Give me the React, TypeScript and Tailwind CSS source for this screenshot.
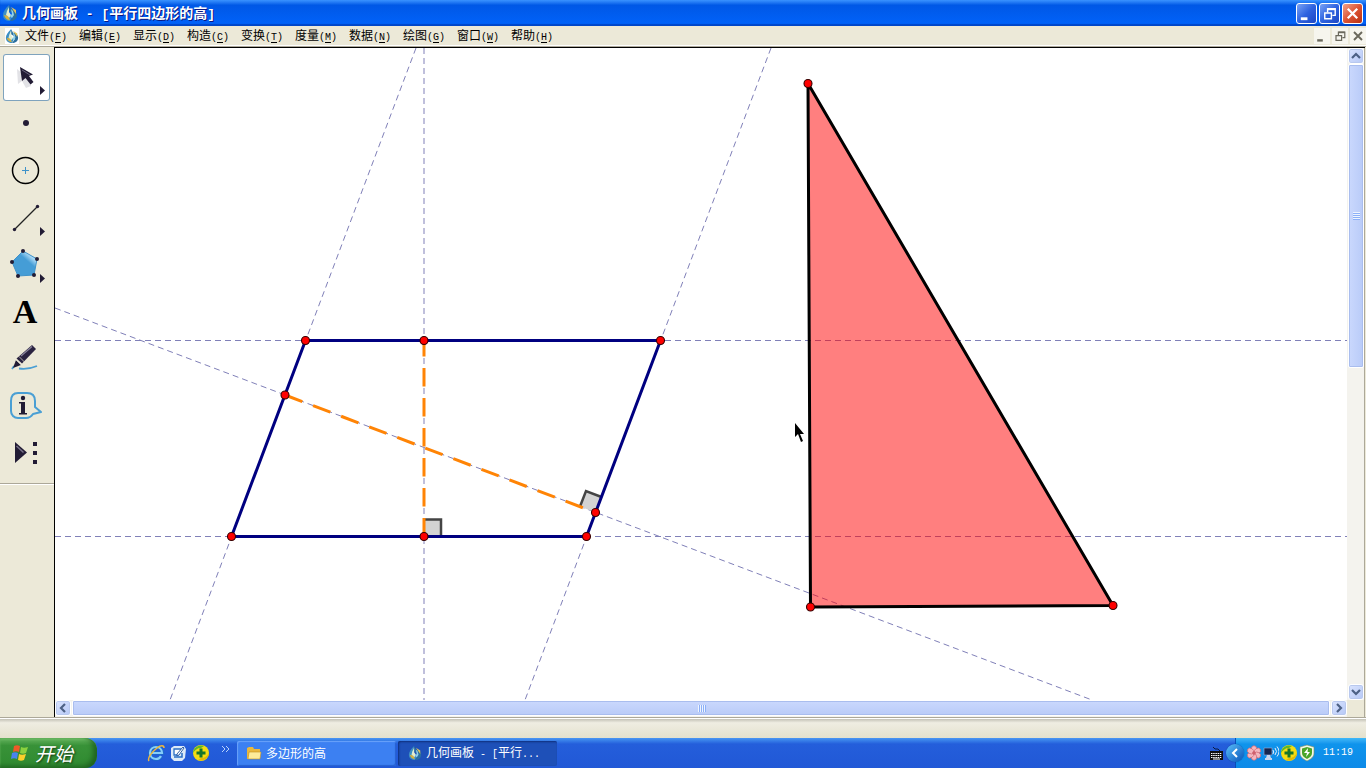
import { useState } from 'react';
import type { ReactNode } from 'react';
import { clsx } from 'clsx';

const menus = [
  { label: '文件', key: 'F' },
  { label: '编辑', key: 'E' },
  { label: '显示', key: 'D' },
  { label: '构造', key: 'C' },
  { label: '变换', key: 'T' },
  { label: '度量', key: 'M' },
  { label: '数据', key: 'N' },
  { label: '绘图', key: 'G' },
  { label: '窗口', key: 'W' },
  { label: '帮助', key: 'H' },
];

const flyout = <path d="M37 32l5 4.500-5 4.500z" fill="#221c35" />;

const tools: { name: string; icon: ReactNode }[] = [
  {
    name: '移动箭头工具',
    icon: (
      <>
        <path d="M14 15l1 15 4-3 4 7 5-2-3-8z" fill="#8a8a9a" opacity="0.25" />
        <path d="M17 13l2 14 3.500-3 5 6.500 3-2.500-4.500-6 4-1.500z" fill="#221c35" />
        <path d="M19 16l8 5" stroke="#6a6680" strokeWidth="1" />
        {flyout}
      </>
    ),
  },
  { name: '点工具', icon: <circle cx="23" cy="22" r="3" fill="#221c35" /> },
  {
    name: '圆工具',
    icon: (
      <>
        <circle cx="22.500" cy="22.500" r="13" fill="none" stroke="#000" strokeWidth="1.500" />
        <path d="M19 22.500h7M22.500 19v7" stroke="#3f92c9" />
      </>
    ),
  },
  {
    name: '线段直尺工具',
    icon: (
      <>
        <path d="M11.500 34.500l23-23" stroke="#222" strokeWidth="1.300" />
        <circle cx="11.500" cy="34.500" r="1.700" fill="#221c35" />
        <circle cx="34.500" cy="11.500" r="1.700" fill="#221c35" />
        {flyout}
      </>
    ),
  },
  {
    name: '多边形工具',
    icon: (
      <>
        <defs>
          <linearGradient id="pentagon" x1="1" y1="0" x2="0.400" y2="0.700">
            <stop offset="0.100" stopColor="#6cb5e4" />
            <stop offset="0.350" stopColor="#a9d8f5" />
            <stop offset="0.600" stopColor="#459dd6" />
          </linearGradient>
        </defs>
        <path d="M20 9l14 8-3 16-16 1-6-14z" fill="url(#pentagon)" stroke="#3f92c9" />
        {[[20, 9], [34, 17], [31, 33], [15, 34], [9, 20]].map(([x, y]) => (
          <circle key={x} cx={x} cy={y} r="2" fill="#221c35" />
        ))}
        {flyout}
      </>
    ),
  },
  {
    name: '文字工具',
    icon: (
      <text x="22" y="34" textAnchor="middle" className="font-['Liberation_Serif',serif] text-[34px] font-bold">
        A
      </text>
    ),
  },
  {
    name: '标记工具',
    icon: (
      <>
        <path d="M9 33l2-3M16 32.500c6 1 12 0 18-2.500" fill="none" stroke="#4a9fd4" strokeWidth="1.800" />
        <path d="M10 32l3-8 5 5z" fill="#221c35" />
        <path d="M13.500 22.500L29 9l4 4-14 14.500z" fill="#2a2340" />
        <path d="M18 20L29 10.500" stroke="#8a859c" strokeWidth="1.200" />
        <path d="M12.500 23.500l6 5.500M16 20.500l5.500 5.500" stroke="#ece9d8" strokeWidth="0.700" />
      </>
    ),
  },
  {
    name: '信息工具',
    icon: (
      <>
        <path
          d="M15 10h9c5 0 8 3 8 8v6l6 5-8 2c-2 3-4 4-7 4h-8c-4 0-7-3-7-7V18c0-5 2-8 7-8z"
          fill="none"
          stroke="#4a9fd4"
          strokeWidth="2"
          strokeLinejoin="round"
        />
        <circle cx="20" cy="15" r="2.200" fill="#221c35" />
        <path d="M16 19h6v11h2v1.500h-8V30h2v-9.500h-2z" fill="#221c35" />
      </>
    ),
  },
  {
    name: '自定义工具',
    icon: (
      <>
        <path d="M12 12l12 10.500L12 33z" fill="#221c35" />
        <path d="M13.500 16l7 6.500" stroke="#777189" strokeWidth="1.500" />
        <path d="M30 12h4v4h-4zM30 21h4v4h-4zM30 30h4v4h-4z" fill="#221c35" />
      </>
    ),
  },
];

const vertices = [
  [305.5, 340.5],
  [424, 340.5],
  [660.5, 340.5],
  [285, 395],
  [595.5, 512.5],
  [231.5, 536.5],
  [424, 536.5],
  [586.5, 536.5],
  [808, 83.5],
  [810.5, 607],
  [1113, 605.5],
];

// Half-width text, two Latin characters to one Chinese character
function Half({ children, large }: { children: ReactNode; large?: boolean }) {
  return (
    <span className={clsx("whitespace-pre font-['Liberation_Mono',monospace]", large ? 'text-[13px]' : 'text-[10px]')}>
      {children}
    </span>
  );
}

function AppIcon({ className }: { className?: string }) {
  return (
    <svg viewBox="0 0 16 16" className={clsx('shrink-0', className)}>
      <path d="M7 0C3 4 1 7 1 10c0 4 3 6 7 6l2-4-4-3z" fill="#3c8fc4" />
      <path d="M7 0l2 4c5 1 6 4 6 6 0 4-3 6-7 6l3-4-1-4-3-2z" fill="#2b6f9e" />
      <path d="M7 2L5 6l-1 4 3 3 2-3-2-3z" fill="#e2edd0" />
      <path d="M9 4l2 2 1 4-2 3-2-2 2-2z" fill="#8fd0e8" />
      <path d="M2 10c1 3 3 5 6 5l-2-4z" fill="#d9b23c" />
      <path d="M9 2l5 3v4z" fill="#e0c25a" />
    </svg>
  );
}

function MinimizeGlyph() {
  return <path d="M4 14h7v3H4z" fill="currentColor" />;
}

function RestoreGlyph() {
  return (
    <>
      <path d="M8 9V5h8v7h-3" fill="none" stroke="currentColor" strokeWidth="1.500" />
      <path d="M8 5.500h8" stroke="currentColor" strokeWidth="2" />
      <path d="M5 9.500h7v6H5z" fill="none" stroke="currentColor" strokeWidth="1.500" />
    </>
  );
}

function CloseGlyph() {
  return <path d="M5 5l10 10M15 5L5 15" stroke="currentColor" strokeWidth="2.400" />;
}

const windowButtons = [
  { name: '最小化', glyph: <MinimizeGlyph /> },
  { name: '还原', glyph: <RestoreGlyph /> },
  { name: '关闭', glyph: <CloseGlyph /> },
];

function TitleBar() {
  return (
    <header className="flex h-[26px] shrink-0 items-center bg-linear-to-b from-[#3a93ff] via-[#0058e6] via-20% to-[#0163fb] pr-[3px] pl-[2px] shadow-[inset_0_-2px_1px_#0046c8]">
      <AppIcon className="size-4" />
      <h1 className="ml-1 flex-1 text-[14px] leading-5 font-bold whitespace-pre text-white [text-shadow:1px_1px_0_#0a1883]">
        几何画板<Half large> - [</Half>平行四边形的高<Half large>]</Half>
      </h1>
      <div className="flex gap-[2px]">
        {windowButtons.map((button, i) => (
          <button
            key={button.name}
            aria-label={button.name}
            className={clsx(
              'size-[21px] rounded-[3px] border border-white text-white',
              i === 2
                ? 'bg-linear-to-br from-[#f0a088] via-[#dd5433] to-[#b9300f]'
                : 'bg-linear-to-br from-[#7ba2f5] via-[#2f63e0] to-[#1c46c4]'
            )}
          >
            <svg viewBox="0 0 20 20" className="size-full">
              {button.glyph}
            </svg>
          </button>
        ))}
      </div>
    </header>
  );
}

function MenuBar() {
  return (
    <nav className="flex h-[21px] shrink-0 items-center border-b border-[#aca899] bg-[#ece9d8] pl-[5px] shadow-[inset_0_-1px_0_#fff]">
      <span className="flex h-4 w-[14px] items-center bg-white">
        <AppIcon className="size-[14px]" />
      </span>
      <div className="flex flex-1">
        {menus.map((menu) => (
          <button key={menu.key} className="w-[54px] text-center text-[12px] leading-5 whitespace-nowrap">
            {menu.label}
            <Half>
              (<u className="underline-offset-2">{menu.key}</u>)
            </Half>
          </button>
        ))}
      </div>
      <div className="flex gap-[2px]">
        {windowButtons.map((button) => (
          <button key={button.name} aria-label={`${button.name}文档`} className="size-4 bg-[#f6f5ee] text-[#6a685c]">
            <svg viewBox="0 0 20 20" className="size-4">
              {button.glyph}
            </svg>
          </button>
        ))}
      </div>
    </nav>
  );
}

function ToolBox() {
  const [active, setActive] = useState(0);

  return (
    <aside className="flex w-[54px] shrink-0 flex-col bg-[#ece9d8] pt-[7px]">
      <div className="flex flex-col border-b border-[#aca899] pb-[6px] pl-[3px]">
        {tools.map((tool, i) => (
          <button
            key={tool.name}
            aria-label={tool.name}
            onClick={() => setActive(i)}
            className={clsx('size-[47px] rounded-[3px]', active === i && 'bg-white inset-ring inset-ring-[#7fa3bd]')}
          >
            <svg width="47" height="47" viewBox="0 0 47 47">
              {tool.icon}
            </svg>
          </button>
        ))}
      </div>
      <div className="flex-1 border-t border-white" />
    </aside>
  );
}

function Sketch() {
  return (
    <svg className="block size-full bg-white" role="img" aria-label="平行四边形的高">
      <g transform="translate(-55 -48)">
        <g stroke="#8080b8" strokeWidth="1" strokeDasharray="6 4" fill="none">
          <path d="M55 340.500H1366M55 536.500H1366M424 48V700" />
          <path d="M416 48L170 700M771 48L525 700M55 308L1092 700" />
        </g>

        <polygon points="808,83.5 810.5,607 1113,605.5" fill="#f00" fillOpacity="0.500" />
        <polygon
          points="808,83.5 810.5,607 1113,605.5"
          fill="none"
          stroke="#000"
          strokeWidth="3"
          strokeLinejoin="round"
        />

        <path d="M424 536.500v-17h17v17z" fill="#d3d3d3" />
        <path d="M424 519.500h17v17" fill="none" stroke="#444" strokeWidth="2.500" />
        <path d="M595.500 512.500l-15.500-6 6-15.500 15.500 6z" fill="#d3d3d3" />
        <path d="M580 506.500l6-15.500 15.500 6" fill="none" stroke="#444" strokeWidth="2.500" />

        <g stroke="#ff8405" strokeWidth="3" strokeDasharray="18.500 11.500">
          <path d="M424 536.500V340.500" />
          <path d="M285 395L595.500 512.500" />
        </g>
        <polygon
          points="305.5,340.5 660.5,340.5 586.5,536.5 231.5,536.5"
          fill="none"
          stroke="#000080"
          strokeWidth="3"
        />

        {vertices.map(([x, y]) => (
          <circle key={`${x}-${y}`} cx={x} cy={y} r="4" fill="#f00" stroke="#300" strokeWidth="1.100" />
        ))}

        <path d="M795 423v14l3-3 3 8 2-1-3-7h4z" fill="#000" />
      </g>
    </svg>
  );
}

function ScrollArrow({ label, d }: { label: string; d: string }) {
  return (
    <button
      aria-label={label}
      className="size-4 shrink-0 rounded-[3px] border border-white bg-linear-to-br from-[#dae4fe] to-[#b6c8f6] inset-ring inset-ring-[#b8c8ee]"
    >
      <svg viewBox="0 0 14 14" className="size-[14px]">
        <path d={d} fill="none" stroke="#4d6185" strokeWidth="2.200" />
      </svg>
    </button>
  );
}

function VerticalScrollbar() {
  return (
    <div className="flex w-[18px] shrink-0 flex-col border-r border-[#aca899] bg-[#f4f3ee] pl-px">
      <ScrollArrow label="向上滚动" d="M3 9l4-4 4 4" />
      <div className="flex flex-1 flex-col">
        <div className="flex h-[49%] w-4 flex-col items-center justify-center gap-px rounded-[2px] border border-white bg-linear-to-r from-[#cad8fd] to-[#b9cbf8] inset-ring inset-ring-[#a9bdee]">
          {[0, 1, 2, 3].map((i) => (
            <span key={i} className="h-px w-[7px] bg-[#eef4fe] shadow-[0_1px_0_#8cb0f8]" />
          ))}
        </div>
      </div>
      <ScrollArrow label="向下滚动" d="M3 5l4 4 4-4" />
    </div>
  );
}

function HorizontalScrollbar() {
  return (
    <div className="flex h-[17px] shrink-0 bg-[#ece9d8]">
      <div className="flex min-w-0 flex-1 gap-px bg-[#f4f3ee]">
        <ScrollArrow label="向左滚动" d="M9 3L5 7l4 4" />
        <div className="flex h-4 flex-1 items-center justify-center gap-px rounded-[2px] border border-white bg-linear-to-b from-[#cad8fd] to-[#b9cbf8] inset-ring inset-ring-[#a9bdee]">
          {[0, 1, 2, 3].map((i) => (
            <span key={i} className="h-[7px] w-px bg-[#eef4fe] shadow-[1px_0_0_#8cb0f8]" />
          ))}
        </div>
        <ScrollArrow label="向右滚动" d="M5 3l4 4-4 4" />
      </div>
      <div className="w-[18px] shrink-0 border-r border-[#aca899]" />
    </div>
  );
}

function PlusBall() {
  return (
    <svg viewBox="0 0 18 18" className="size-[18px]">
      <circle cx="9" cy="9" r="8" fill="#f4dc12" />
      <path d="M1 9a8 8 0 0 1 11-7l-3 2C5 4 3 6 1 9z" fill="#5cb82c" />
      <path d="M17 9a8 8 0 0 1-11 7l3-2c4 0 6-2 8-5z" fill="#e3b808" />
      <path d="M7.500 4.500h3v3h3v3h-3v3h-3v-3h-3v-3h3z" fill="#17752a" />
    </svg>
  );
}

function StartButton() {
  return (
    <button className="flex h-[30px] w-[97px] items-center gap-[5px] rounded-r-[12px] bg-linear-to-b from-[#64b45e] via-[#389238] via-25% to-[#2f8a30] pl-[10px] shadow-[inset_-4px_-2px_5px_#1f6420,inset_0_2px_2px_#6fbf68]">
      <svg viewBox="0 0 20 20" className="size-5">
        <path d="M4 3c2-1 4-1 6 0L9 9c-2-1-4-1-6 0z" fill="#ee5a28" />
        <path d="M11 4c2 1 4 1 7 0l-2 6c-2 1-4 1-6 0z" fill="#8bd13f" />
        <path d="M2 10c2-1 4-1 6 0l-1 6c-2-1-4-1-6 0z" fill="#4a83ee" />
        <path d="M9 11c2 1 4 1 7 0l-2 6c-2 1-4 1-6 0z" fill="#fbd02b" />
      </svg>
      <span className="text-[19px] leading-6 text-white italic [text-shadow:1px_1px_2px_#123a12]">开始</span>
    </button>
  );
}

function QuickLaunch() {
  return (
    <div className="ml-[50px] flex h-full items-center">
      <button aria-label="Internet Explorer" className="mr-[5px] size-[18px]">
        <svg viewBox="0 0 18 18" className="size-full" fill="none">
          <path d="M14 12c-1 2-3 3-5 3-3 0-6-2-6-6s3-6 6-6 6 2 6 6H5" stroke="#1b6cc8" strokeWidth="3.600" />
          <path d="M14 12c-1 2-3 3-5 3-3 0-6-2-6-6s3-6 6-6 6 2 6 6H5" stroke="#86cdfa" strokeWidth="2.200" />
          <path d="M2 17c-2-3 3-9 8-13 4-3 7-3 7 0" stroke="#f0b83a" strokeWidth="1.500" />
        </svg>
      </button>
      <button aria-label="显示桌面" className="mr-[6px] size-4">
        <svg viewBox="0 0 16 16" className="size-full">
          <path d="M1 3l3-2h10l2 3-1 9-3 3H4l-3-3z" fill="#dceaf8" />
          <path d="M4 4h7v2L8 10H4z" fill="#fff" stroke="#2a6fc4" strokeWidth="1.300" />
          <path d="M13 2L7 9v2l2-1 5-7z" fill="#fff" stroke="#1c4f9c" strokeWidth="0.900" />
          <path d="M4 12h8V8" fill="none" stroke="#2a6fc4" strokeWidth="1.500" />
        </svg>
      </button>
      <button aria-label="安全卫士">
        <PlusBall />
      </button>
      <button aria-label="更多" className="mb-2 ml-[11px] size-[10px]">
        <svg viewBox="0 0 10 10" className="size-full">
          <path d="M1 2l3 3-3 3M5 2l3 3-3 3" fill="none" stroke="#b8d2fa" />
        </svg>
      </button>
    </div>
  );
}

function Tray() {
  return (
    <div className="ml-auto flex h-full">
      <svg viewBox="0 0 13 14" className="mr-[12px] h-full w-[13px]">
        <path d="M3 1l2 2h3l2 2" fill="none" stroke="#0a1a40" />
        <path d="M0 5h13v9H0z" fill="#111" />
        <path d="M1 7.500h11M1 9.500h11M1 11.500h11" stroke="#fff" strokeDasharray="1.500 0.700" />
        <path d="M3 13h7" stroke="#fff" />
      </svg>
      <div className="flex h-full w-[131px] items-center border-l border-[#0a4fb8] bg-linear-to-b from-[#3fb8f8] via-[#0f94ec] via-20% to-[#0d8ae8]">
        <button
          aria-label="显示隐藏的图标"
          className="-ml-[10px] size-[18px] rounded-full bg-linear-to-br from-[#5ac0fa] to-[#0a52b8] shadow-[0_0_1px_#08306c]"
        >
          <svg viewBox="0 0 18 18" className="size-full">
            <path d="M11 5L7 9l4 4" fill="none" stroke="#fff" strokeWidth="2" />
          </svg>
        </button>
        <div className="ml-[2px] flex items-center gap-px">
          <svg viewBox="0 0 16 16" className="size-4">
            {[0, 60, 120, 180, 240, 300].map((angle) => (
              <ellipse
                key={angle}
                cx="8"
                cy="4"
                rx="2.700"
                ry="3.300"
                fill="#f3b6be"
                stroke="#cf6674"
                strokeWidth="0.700"
                transform={`rotate(${angle} 8 8)`}
              />
            ))}
            <circle cx="8" cy="8" r="1.800" fill="#d0616e" />
          </svg>
          <svg viewBox="0 0 16 16" className="size-4">
            <path d="M1 3h8v7H1z" fill="#16264f" stroke="#8ea8d4" strokeWidth="0.700" />
            <path d="M4 10h3l1 3H3z" fill="#c8d4ea" />
            <path d="M2 14h7" stroke="#c8d4ea" strokeWidth="2" />
            <path d="M10 5q1.500 2 0 4M12 3q3 3.500 0 7M14 1.500q4 5 0 10" fill="none" stroke="#e2ecfa" />
          </svg>
          <PlusBall />
          <svg viewBox="0 0 16 18" className="h-[18px] w-4">
            <path d="M8 1l7 2v6c0 4-3 6-7 8-4-2-7-4-7-8V3z" fill="#f4f7e6" stroke="#7b8a5a" strokeWidth="0.600" />
            <path d="M8 3l5 1.500V9c0 3-2 4.500-5 6-3-1.500-5-3-5-6V4.500z" fill="#4aa528" />
            <path d="M9 4L5 9h3l-1 4 4-5H8.500z" fill="#fff" />
          </svg>
        </div>
        <time className="ml-2 font-['Liberation_Mono',monospace] text-[10px] leading-5 text-white">11:19</time>
      </div>
    </div>
  );
}

function TaskBar() {
  return (
    <footer className="flex h-[30px] shrink-0 items-center bg-linear-to-b from-[#4a96f2] via-[#245edb] via-20% to-[#2158d6]">
      <StartButton />
      <QuickLaunch />
      <div className="ml-[6px] flex gap-[2px] text-[12px] leading-5 text-white">
        <button className="flex h-[25px] w-[159px] items-center rounded-[2px] bg-[#3c80f2] pl-[9px] shadow-[inset_1px_1px_1px_#6aa2fa,inset_-1px_-1px_1px_#2560d0]">
          <svg viewBox="0 0 16 16" className="mr-1 size-4">
            <path d="M1 3l2-1h4l1 2h6v10H1z" fill="#e9b83d" />
            <path d="M3 7h12l-1 7H2z" fill="#fdeb9a" stroke="#c48f1c" strokeWidth="0.600" />
          </svg>
          多边形的高
        </button>
        <button className="flex h-[25px] w-[159px] items-center rounded-[2px] bg-[#1e50b8] pl-[10px] whitespace-pre shadow-[inset_1px_1px_2px_#0f2f7c]">
          <AppIcon className="mr-1 size-[14px]" />
          <span>
            几何画板<Half> - [</Half>平行<Half>...</Half>
          </span>
        </button>
      </div>
      <Tray />
    </footer>
  );
}

export default function App() {
  return (
    <div className="flex h-screen flex-col overflow-hidden bg-[#ece9d8] font-['Noto_Sans_CJK_SC',sans-serif] text-black">
      <TitleBar />
      <MenuBar />
      <main className="flex min-h-0 flex-1 border-b border-[#aca899]">
        <ToolBox />
        <section className="flex min-w-0 flex-1 flex-col border-t border-l border-black">
          <div className="flex min-h-0 flex-1">
            <div className="min-w-0 flex-1">
              <Sketch />
            </div>
            <VerticalScrollbar />
          </div>
          <HorizontalScrollbar />
        </section>
        <div className="w-px shrink-0" />
      </main>
      <div className="h-5 shrink-0 border-t border-white bg-linear-to-b from-[#c4c2b6] via-[#efede2] via-20% to-[#e4e1cd]" />
      <TaskBar />
    </div>
  );
}
